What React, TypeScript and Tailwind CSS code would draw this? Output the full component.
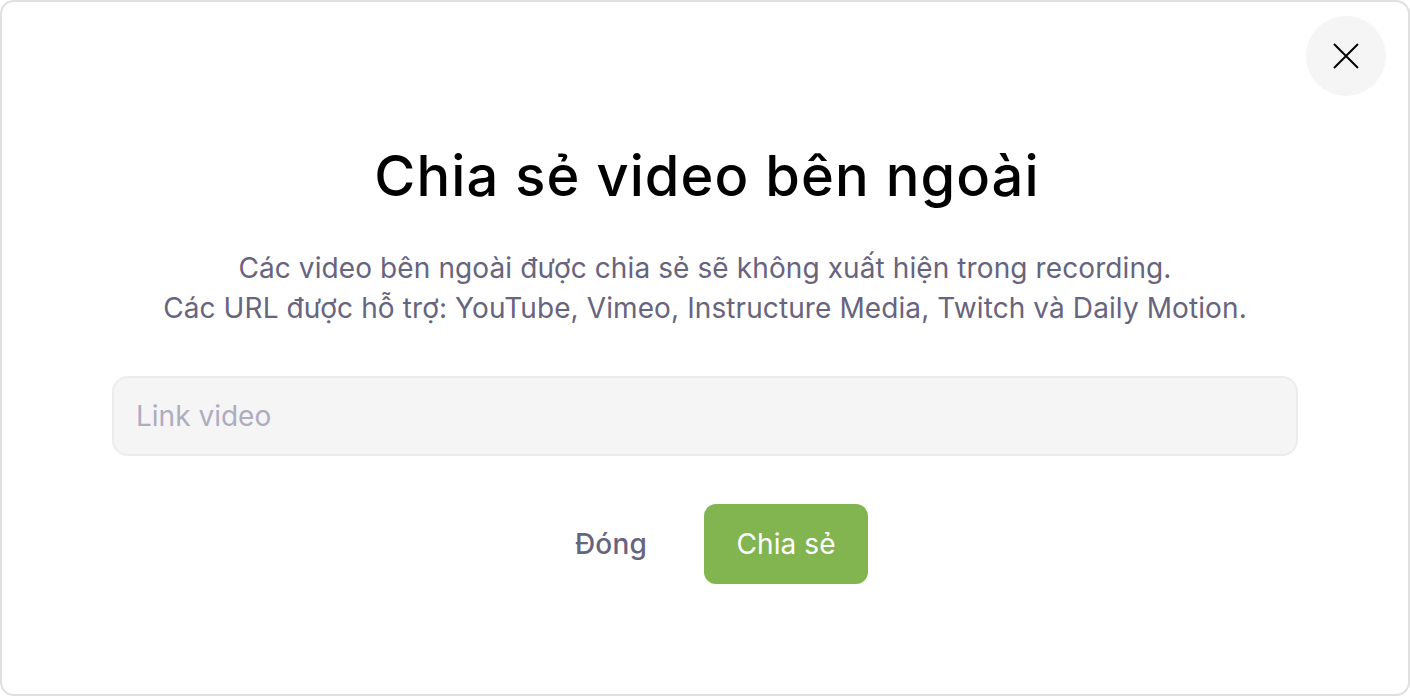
export default function App() {
  return (
    <main className="h-[696px] w-[1410px] bg-white font-['Inter',sans-serif]">
      <div className="relative flex h-full flex-col items-center rounded-[14px] border-2 border-[#e0e0e0] pt-[142px]">
        <button className="absolute right-[22px] top-[14px] flex h-20 w-20 items-center justify-center rounded-full bg-[#f5f5f5]">
          <svg width="28" height="28" viewBox="0 0 28 28" fill="none" stroke="#000" strokeWidth="2">
            <path d="M2 2l24 24M26 2L2 26" />
          </svg>
        </button>

        <h1 className="pl-1 text-[56px] font-medium leading-[64px] tracking-[1.06px] text-black">Chia sẻ video bên ngoài</h1>

        <p className="mt-10 text-center text-[28px] leading-10 tracking-[0.1px] text-[#67647e]">
          Các video bên ngoài được chia sẻ sẽ không xuất hiện trong recording.
          <br />
          Các URL được hỗ trợ: YouTube, Vimeo, Instructure Media, Twitch và Daily Motion.
        </p>

        <input
          placeholder="Link video"
          className="mt-12 h-20 w-[1186px] rounded-2xl border-2 border-[#ececec] bg-[#f5f5f5] px-[22px] text-[28px] outline-none placeholder:text-[#aeacbf]"
        />

        <div className="mt-12 flex items-center gap-[25px] pl-px">
          <button className="h-20 px-8 text-[28px] font-medium tracking-[0.2px] text-[#67647e]">Đóng</button>
          <button className="h-20 w-[164px] rounded-xl bg-[#82b450] text-[28px] font-normal tracking-[0.1px] text-white">Chia sẻ</button>
        </div>
      </div>
    </main>
  );
}
